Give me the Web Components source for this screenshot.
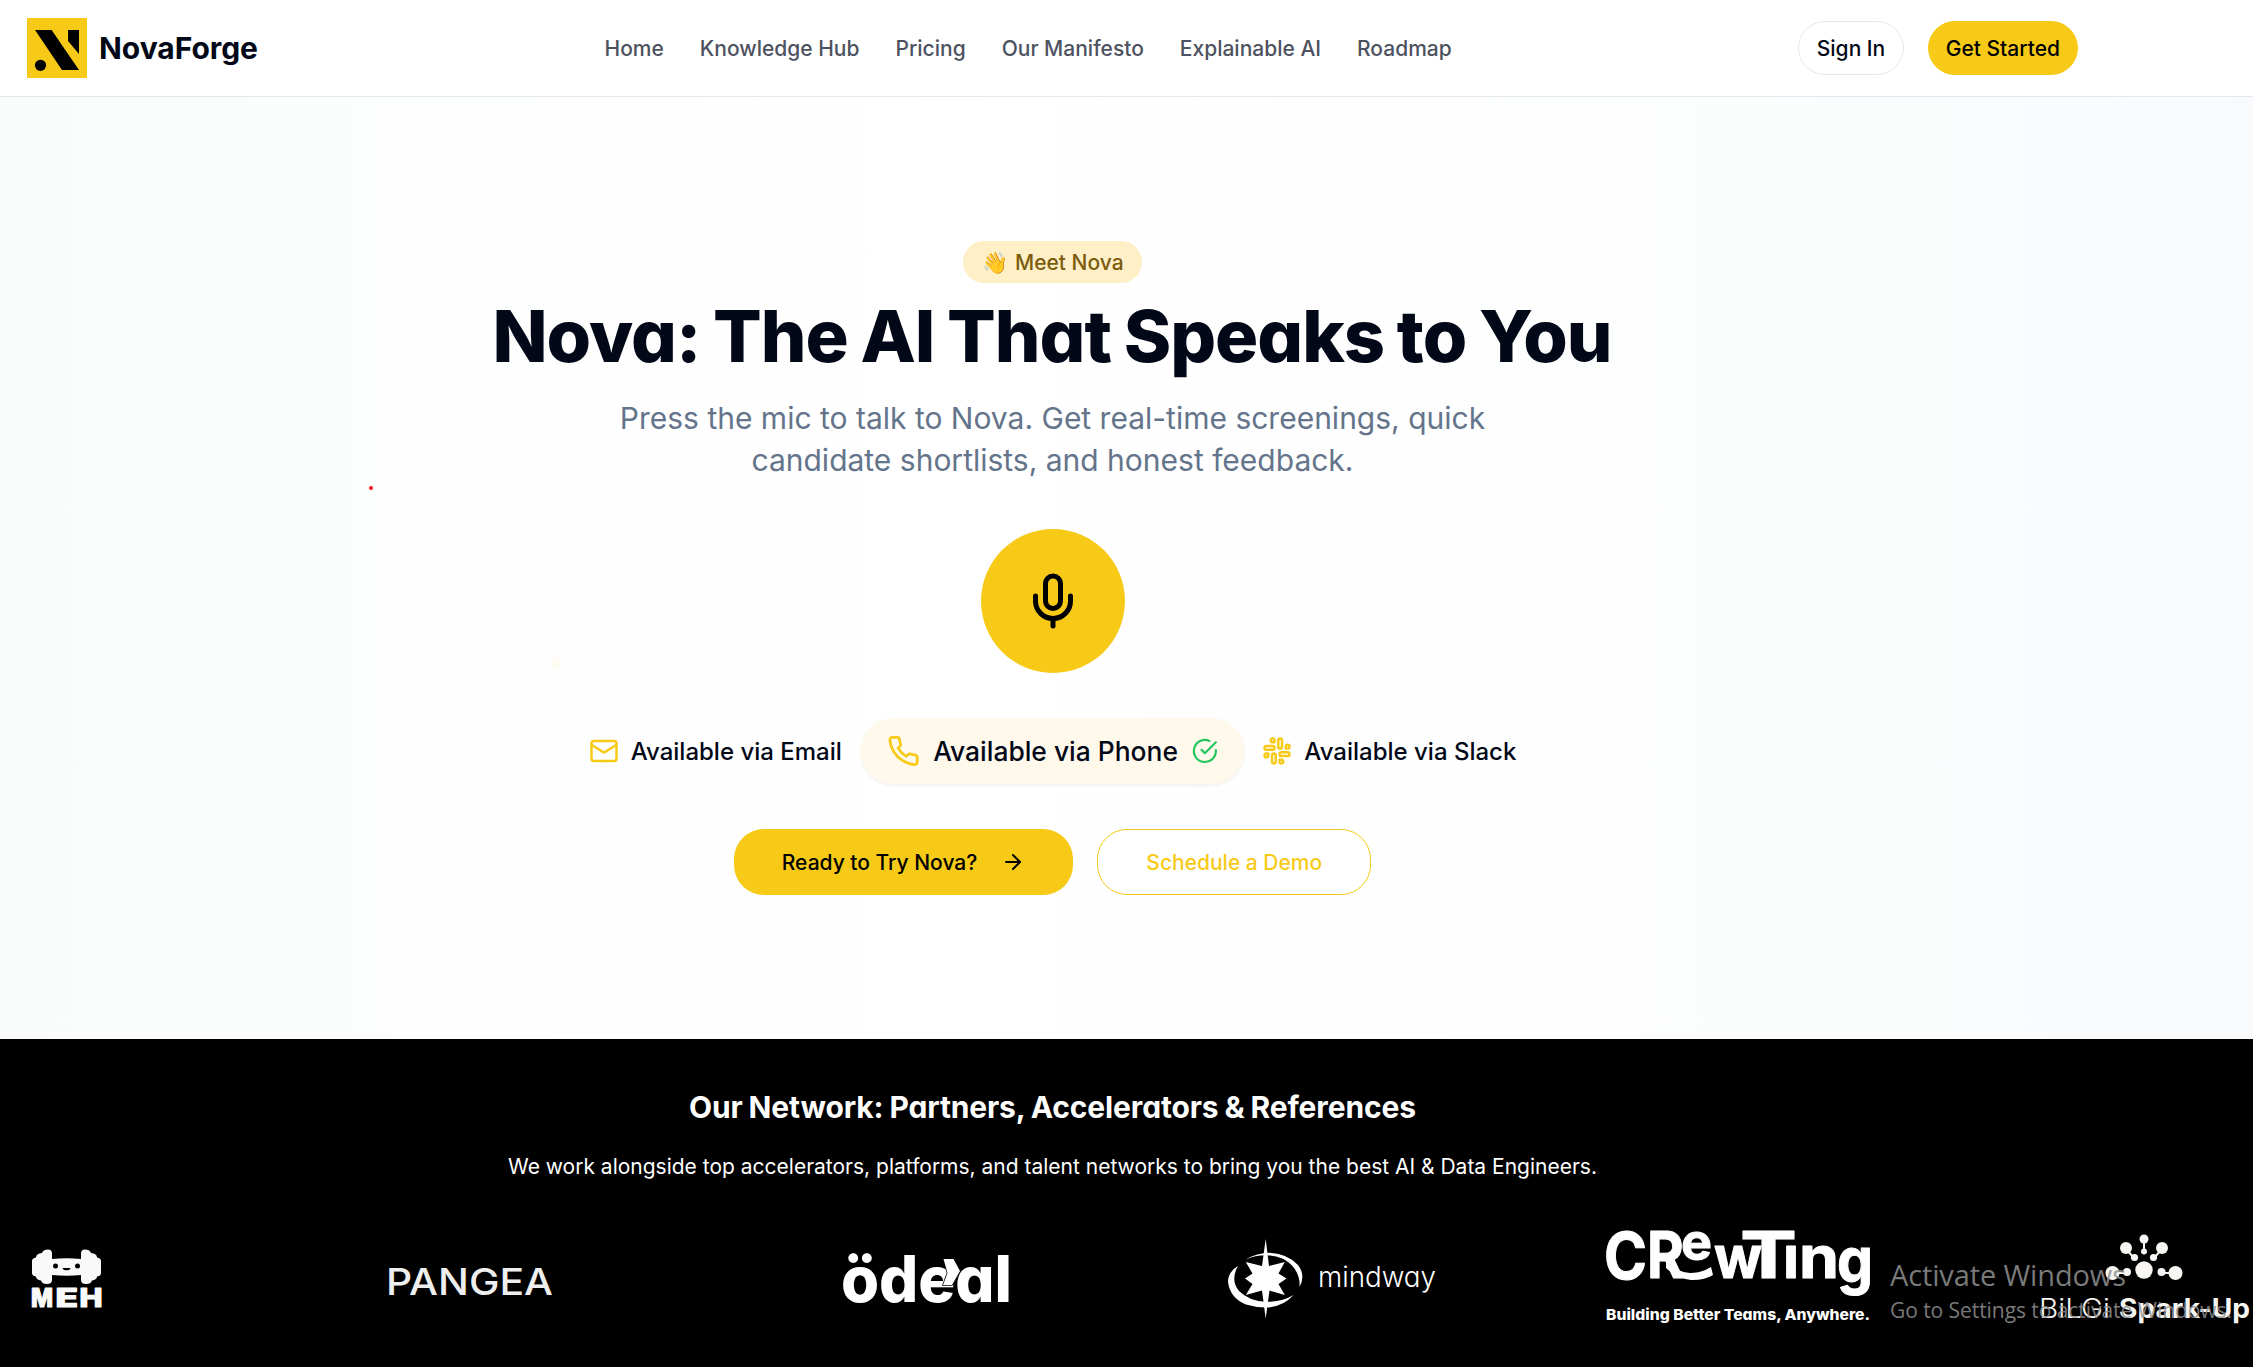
<!DOCTYPE html>
<html lang="en">
<head>
<meta charset="utf-8">
<title>NovaForge</title>
<style>
  html, body { margin: 0; padding: 0; }
  body { font-family: Inter, "Liberation Sans", sans-serif; color: #020817; background: #fff; width: 2253px; height: 1367px; overflow: hidden; position: relative; }
</style>
</head>
<body>
<nova-header></nova-header>
<nova-hero></nova-hero>
<nova-network></nova-network>
<os-notice></os-notice>
<script>
const define = (name, html, ready) => {
  const template = document.createElement('template');
  template.innerHTML = html;
  customElements.define(name, class extends HTMLElement {
    constructor() {
      super();
      this.attachShadow({ mode: 'open' }).appendChild(template.content.cloneNode(true));
    }
    connectedCallback() { if (ready) ready(this); }
  });
};

/* Spreads its text over the width given in the "w" attribute. */
define('fit-text', `
  <style>:host{display:inline-block;white-space:nowrap} span{display:inline-block}</style>
  <span><slot></slot></span>`, el => {
  const span = el.shadowRoot.querySelector('span');
  const n = el.textContent.length;
  const target = parseFloat(el.getAttribute('w'));
  span.style.wordSpacing = (el.getAttribute('ws') || 0) + 'px';
  const space = (target - span.getBoundingClientRect().width) / (n - 1);
  span.style.letterSpacing = space + 'px';
  span.style.marginRight = -space + 'px';
});

const ICONS = {
  mic: '<path d="M12 19v3"/><path d="M19 10v2a7 7 0 0 1-14 0v-2"/><rect x="9" y="2" width="6" height="13" rx="3"/>',
  mail: '<rect width="20" height="16" x="2" y="4" rx="2"/><path d="m22 7-8.97 5.7a1.94 1.94 0 0 1-2.06 0L2 7"/>',
  phone: '<path d="M22 16.92v3a2 2 0 0 1-2.18 2 19.79 19.79 0 0 1-8.63-3.07 19.5 19.5 0 0 1-6-6 19.79 19.79 0 0 1-3.07-8.67A2 2 0 0 1 4.11 2h3a2 2 0 0 1 2 1.72 12.84 12.84 0 0 0 .7 2.81 2 2 0 0 1-.45 2.11L8.09 9.91a16 16 0 0 0 6 6l1.27-1.27a2 2 0 0 1 2.11-.45 12.84 12.84 0 0 0 2.81.7A2 2 0 0 1 22 16.92z"/>',
  check: '<path d="M22 11.08V12a10 10 0 1 1-5.93-9.14"/><path d="m9 11 3 3L22 4"/>',
  slack: '<rect width="3" height="8" x="13" y="2" rx="1.5"/><path d="M19 8.5V10h1.5A1.5 1.5 0 1 0 19 8.5"/><rect width="3" height="8" x="8" y="14" rx="1.5"/><path d="M5 15.5V14H3.5A1.5 1.5 0 1 0 5 15.5"/><rect width="8" height="3" x="14" y="13" rx="1.5"/><path d="M15.5 19H14v1.5a1.5 1.5 0 1 0 1.5-1.5"/><rect width="8" height="3" x="2" y="8" rx="1.5"/><path d="M8.5 5H10V3.5A1.5 1.5 0 1 0 8.5 5"/>',
  arrow: '<path d="M5 12h14"/><path d="m12 5 7 7-7 7"/>'
};
define('line-icon', `
  <style>:host{display:block;flex:none;width:30px;height:30px} svg{display:block;width:100%;height:100%;fill:none;stroke:currentColor;stroke-width:2;stroke-linecap:round;stroke-linejoin:round}</style>
  <svg viewBox="0 0 24 24"></svg>`, el => {
  const name = el.getAttribute('name');
  if (name) el.shadowRoot.querySelector('svg').innerHTML = ICONS[name];
});

define('nova-button', `
  <style>
    :host{display:flex;align-items:center;justify-content:center;box-sizing:border-box;height:54px;padding:0 18px;border-radius:30px;font-size:21px;font-weight:500;white-space:nowrap;background:#f7ca18;color:#000}
    :host([kind=plain]){background:#fff;color:#020817;border:1px solid #e2e8f0;padding:0 17.500px}
    :host([size=lg]){height:66px;padding:0 48px}
    :host([kind=outline]){background:#fff;color:#f7ca18;border:1px solid #f7ca18}
  </style>
  <slot></slot>`);

define('nova-header', `
  <style>
    :host{display:block;height:96px;border-bottom:1px solid #e2e8f0;background:#fff}
    header{display:flex;align-items:center;justify-content:space-between;height:96px;padding-left:27px;width:2051px}
    .brand{display:flex;align-items:center;gap:12px;font-size:30px;font-weight:700}
    nav{display:flex;gap:36px;font-size:21px;font-weight:500;color:#4d5260}
    .actions{display:flex;gap:24px}
    svg{display:block}
  </style>
  <header>
    <div class="brand">
      <svg width="60" height="60" viewBox="0 0 60 60"><rect width="60" height="60" fill="#f7ca18"/><path d="M8 12H24.6L52 52H35Z M41 12H52V36L41 23Z"/><circle cx="13.5" cy="47.3" r="5.6"/></svg>
      <fit-text w="159">NovaForge</fit-text>
    </div>
    <nav><span>Home</span><span>Knowledge Hub</span><span>Pricing</span><span>Our Manifesto</span><span>Explainable AI</span><span>Roadmap</span></nav>
    <div class="actions"><nova-button kind="plain">Sign In</nova-button><nova-button>Get Started</nova-button></div>
  </header>`);

define('channel-item', `
  <style>
    :host{display:flex;align-items:center;gap:12px;font-size:24px;font-weight:500;white-space:nowrap}
    :host([active]){box-sizing:border-box;height:60px;padding:0 24px;border-radius:30px;background:#fff9eb;box-shadow:0 1.5px 3px rgba(0,0,0,.06);transform:scale(1.1)}
    line-icon{color:#f7ca18}
    .check{display:none;width:24px;height:24px;color:#22c55e}
    :host([active]) .check{display:block}
  </style>
  <line-icon class="lead"></line-icon><span><slot></slot></span><line-icon class="check" name="check"></line-icon>`, el => {
  const lead = el.shadowRoot.querySelector('.lead');
  lead.shadowRoot.querySelector('svg').innerHTML = ICONS[el.getAttribute('icon')];
});

define('nova-hero', `
  <style>
    :host{display:block;height:942px;box-sizing:border-box;padding-top:144px;position:relative;background:linear-gradient(90deg,#f9fcfb 0,#fcfdfd 16%,#fefefe 30%,#fff 42%,#fefefe 58%,#fcfdfd 75%,#f8fafc 100%)}
    .col{width:2105px;display:flex;flex-direction:column;align-items:center}
    .badge{display:flex;align-items:center;box-sizing:border-box;height:42px;width:179px;padding-left:19px;border-radius:21px;background:#feefc7;color:#7b5c0c;font-size:21px;font-weight:500;gap:8px;white-space:nowrap}
    .wave{width:25px;font-size:21px}
    h1{margin:17px 0 25px;font-size:72px;line-height:72px;font-weight:800;font-feature-settings:"cv11"}
    p{margin:0;font-size:30px;line-height:42px;color:#64748b;text-align:center}
    .mic{margin:48px 0;width:144px;height:144px;border-radius:50%;background:#f7ca18;color:#000;display:flex;align-items:center;justify-content:center}
    .mic line-icon{width:60px;height:60px}
    .channels{display:flex;height:60px;align-items:center;gap:36px}
    .cta{display:flex;gap:24px;margin-top:48px}
    .cta line-icon{width:24px;height:24px;margin-left:24px}
    .dot{position:absolute;left:369px;top:389px;width:4px;height:4px;border-radius:50%;background:#ef1c1c}
    .spark{position:absolute;left:550px;top:560px;width:13px;height:13px;color:#fdfaec}
  </style>
  <div class="col">
    <div class="badge"><span class="wave">👋</span><span>Meet Nova</span></div>
    <h1><fit-text w="1120" ws="-2">Nova: The AI That Speaks to You</fit-text></h1>
    <p>Press the mic to talk to Nova. Get real-time screenings, quick<br>candidate shortlists, and honest feedback.</p>
    <div class="mic"><line-icon name="mic"></line-icon></div>
    <div class="channels">
      <channel-item icon="mail">Available via Email</channel-item>
      <channel-item icon="phone" active>Available via Phone</channel-item>
      <channel-item icon="slack">Available via Slack</channel-item>
    </div>
    <div class="cta">
      <nova-button size="lg">Ready to Try Nova?<line-icon name="arrow"></line-icon></nova-button>
      <nova-button size="lg" kind="outline">Schedule a Demo</nova-button>
    </div>
  </div>
  <div class="dot"></div>
  <line-icon class="spark" name="slack"></line-icon>`);

define('nova-network', `
  <style>
    :host{display:block;box-sizing:border-box;height:328px;background:#000;color:#fff;padding-top:50px;overflow:hidden}
    .col{width:2105px;text-align:center}
    h2{margin:0 0 26px;font-size:30px;line-height:36px;font-weight:700;font-feature-settings:"cv11"}
    p{margin:0;font-size:21px;line-height:32px}
    .logos{display:flex;align-items:flex-start;margin-top:47px;padding-left:32px;width:2221px}
    svg{display:block;flex:none;overflow:visible;fill:#fff;font-family:Inter,sans-serif}
  </style>
  <div class="col">
    <h2><fit-text w="727" ws="-1">Our Network: Partners, Accelerators &amp; References</fit-text></h2>
    <p><fit-text w="1089">We work alongside top accelerators, platforms, and talent networks to bring you the best AI &amp; Data Engineers.</fit-text></p>
  </div>
  <div class="logos">
    <svg width="70" height="104" viewBox="0 0 70 104" style="margin-right:287px;fill:#f9f9f9">
      <path d="M0 31q0-3 4-3.500q0-4 6-4.500q1-3.500 6-3.500q4 0 4 4V29q15-1.600 29 0V23.500q0-4 4-4q5 0 6 3.500q6 .5 6 4.500q4 .5 4 3.500V43q0 3-4 3.500q0 3-5 4q-1 3.500-6 3.500q-5 0-5-4V45q-14 1.600-29 0v5q0 4-5 4q-5 0-6-3.500q-5-1-5-4Q0 46 0 43Z"/>
      <g fill="#000"><circle cx="23.500" cy="36" r="2.500"/><circle cx="45.500" cy="36" r="2.500"/><path d="M30.500 38h8q-.5 2.300-4 2.300t-4-2.300"/></g>
      <text y="77" font-size="25.500" font-weight="800" stroke="#f9f9f9" stroke-width="1.200" stroke-linejoin="round"><tspan x="-1" textLength="22" lengthAdjust="spacingAndGlyphs">M</tspan><tspan x="23.500" textLength="22.500" lengthAdjust="spacingAndGlyphs">E</tspan><tspan x="47.500" textLength="23" lengthAdjust="spacingAndGlyphs">H</tspan></text>
    </svg>
    <svg width="163" height="104" viewBox="0 0 163 104" style="margin-right:291px;fill:#eee">
      <text x="-3" y="65" font-size="37" font-weight="500" textLength="167" lengthAdjust="spacingAndGlyphs">PANGEA</text>
    </svg>
    <svg width="166" height="104" viewBox="0 0 166 104" style="margin-right:219px">
      <text x="-2" y="72" font-size="64" font-weight="800" textLength="171" lengthAdjust="spacingAndGlyphs" style="font-feature-settings:'cv11'">ödeal</text>
      <path d="M100.500 29H110.500L117 41 109 55H100L104.500 43Z" stroke="#000" stroke-width="1.500" paint-order="stroke"/>
    </svg>
    <svg width="208" height="104" viewBox="0 0 208 104" style="margin-right:170px">
      <path d="M37.700 9 41 36 56.800 32 50.500 43.500 58.500 48.500 50.500 54 56.800 65 41.500 60.500 37.700 88.500 34 60.500 17.800 65 24.500 54 17 48.500 24.500 43.500 17.800 32 34 36Z"/>
      <path d="M17.800 29.500Q29 22.800 42 22.800Q60 24 70 35Q78 45 71.500 57Q72.500 45 64 35.500Q55 26.500 42 25.500Q29 24.500 17.800 29.500Z"/>
      <path d="M10 36Q0 42 0 52Q2 68 18 74.500Q28 77.500 37.700 77.500Q55 77 65.500 65Q54 72 37.700 71.800Q21 71 11 61Q2 50 10 36Z"/>
      <text x="90" y="56.500" font-size="28" font-weight="300" textLength="118" lengthAdjust="spacingAndGlyphs" style="font-feature-settings:'cv11'">mindway</text>
    </svg>
    <svg width="264" height="104" viewBox="0 0 264 104" style="margin-right:171px">
      <text font-weight="700" font-size="64" stroke="#fff" stroke-width="1" stroke-linejoin="round"><tspan x="-2" y="48.500" textLength="43" lengthAdjust="spacingAndGlyphs">C</tspan><tspan x="41" y="48" textLength="37" lengthAdjust="spacingAndGlyphs">R</tspan><tspan x="75" y="30" font-size="52" textLength="31" lengthAdjust="spacingAndGlyphs">e</tspan><tspan x="108" y="48" font-size="58" textLength="48" lengthAdjust="spacingAndGlyphs">w</tspan><tspan x="134" y="48" textLength="57" lengthAdjust="spacingAndGlyphs">T</tspan><tspan x="177" y="48" font-size="58" textLength="16" lengthAdjust="spacingAndGlyphs">ı</tspan><tspan x="193" y="48" font-size="58" textLength="40" lengthAdjust="spacingAndGlyphs">n</tspan><tspan x="231" y="52" font-size="62" textLength="36" lengthAdjust="spacingAndGlyphs">g</tspan></text>
      <path d="M60 30Q72 43 84 43Q96 43 105 37L107 45Q98 50.500 85 50Q72 49 60 38Z"/>
      <text x="0" y="90" font-size="15" font-weight="800" textLength="264" lengthAdjust="spacingAndGlyphs" style="font-feature-settings:'cv11'">Building Better Teams, Anywhere.</text>
    </svg>
    <svg width="208" height="104" viewBox="0 0 208 104" style="fill:#f7f6f2">
      <g stroke="#f7f6f2" stroke-width="2"><path d="M103 9V22M85 19 93 28M121 19 113 28M71 43H86M135 43H120"/></g>
      <circle cx="103" cy="9" r="4.500"/><circle cx="103" cy="21.500" r="3"/><circle cx="85" cy="18" r="6"/><circle cx="93.500" cy="27.500" r="3.600"/><circle cx="121" cy="18" r="6"/><circle cx="112.500" cy="27.500" r="3.600"/><circle cx="103" cy="40" r="8.700"/><circle cx="71.500" cy="43" r="7"/><circle cx="86" cy="42" r="4"/><circle cx="134.500" cy="43" r="7"/><circle cx="120.500" cy="42" r="4"/>
      <text y="87.500" font-size="26.500"><tspan x="-2" font-weight="300" textLength="71" lengthAdjust="spacingAndGlyphs">BiLGi</tspan><tspan x="78" font-weight="700" textLength="131" lengthAdjust="spacingAndGlyphs">Spark-Up</tspan></text>
    </svg>
  </div>`);

define('os-notice', `
  <style>
    :host{position:absolute;left:1890px;top:1256px;color:rgba(145,145,145,.85);font-family:"Open Sans",sans-serif}
    div{line-height:38px;font-size:29px} .s{line-height:28px;font-size:21px;margin-top:2px}
  </style>
  <div><fit-text w="236">Activate Windows</fit-text></div>
  <div class="s"><fit-text w="342">Go to Settings to activate Windows.</fit-text></div>`);
</script>
</body>
</html>
